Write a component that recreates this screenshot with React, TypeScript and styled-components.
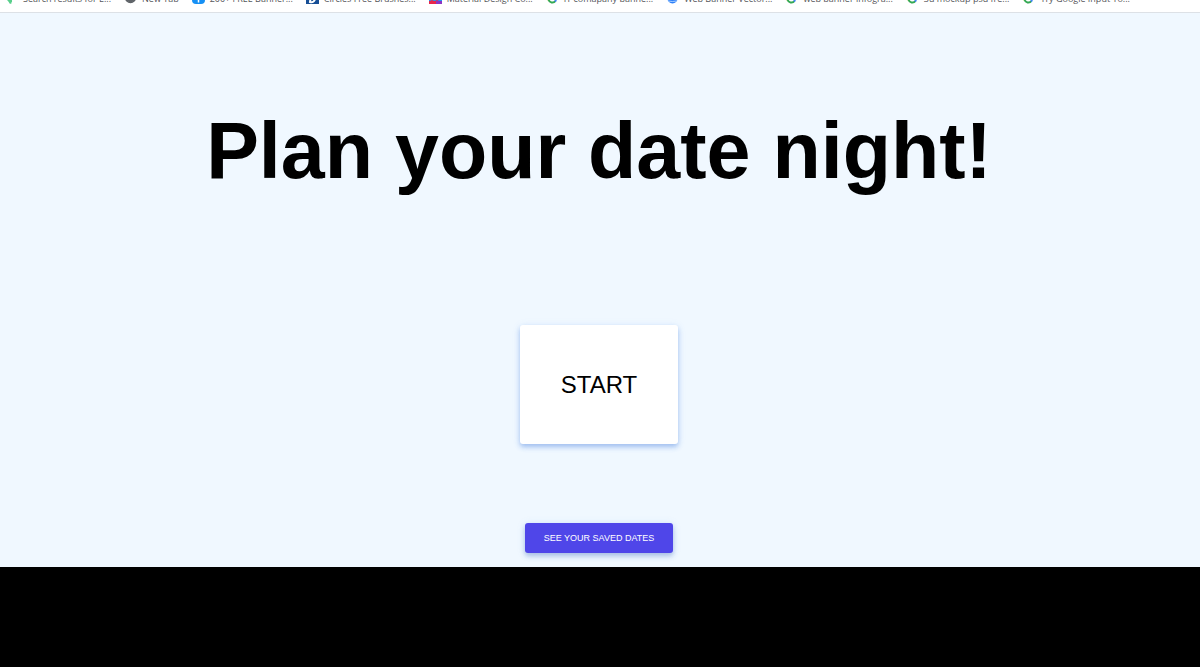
import React from "react";
import styled, { createGlobalStyle } from "styled-components";

const GlobalStyle = createGlobalStyle`
  * { box-sizing: border-box; }
  body {
    margin: 0;
    background: #000;
    font-family: "Liberation Sans", Arial, sans-serif;
  }
`;

const BookmarkBar = styled.nav`
  display: flex;
  align-items: flex-end;
  gap: 13px;
  height: 13px;
  padding: 0 0 5px 5px;
  overflow: hidden;
  background: #fff;
  border-bottom: 1px solid #dde1e6;
`;

const Bookmark = styled.a`
  display: flex;
  flex: none;
  align-items: flex-start;
  gap: 5px;
  color: #55565a;
  font: 9px/16px "Open Sans", sans-serif;
  white-space: nowrap;
  text-decoration: none;
`;

const Glyph = styled.svg`
  flex: none;
  width: 13px;
  height: 13px;
`;

const Hero = styled.main`
  display: flex;
  flex-direction: column;
  align-items: center;
  padding: 93px 2px 14px 0;
  background: #f0f8ff;
`;

const Title = styled.h1`
  margin: 0;
  color: #000;
  font-size: 79px;
  line-height: 90px;
  text-align: center;
`;

const StartButton = styled.button`
  width: 158px;
  height: 119px;
  margin: 129px 0 79px;
  padding: 0;
  border: 0;
  border-radius: 3px;
  background: #fff;
  color: #000;
  font: 24px/28px "Liberation Sans", Arial, sans-serif;
  box-shadow: 0 3px 5px rgba(60, 120, 220, 0.4), 0 1px 8px rgba(90, 150, 240, 0.12);
`;

const SavedButton = styled.button`
  height: 30px;
  padding: 0 19px;
  border: 0;
  border-radius: 3px;
  background: #4f46e9;
  color: #fff;
  font: 9px/14px "Liberation Sans", Arial, sans-serif;
  box-shadow: 0 3px 5px rgba(60, 100, 180, 0.35), 0 1px 8px rgba(90, 150, 240, 0.15);
`;

type Kind = "leaf" | "globe" | "facebook" | "d" | "material" | "google" | "cloud";

const drawings: Record<Kind, React.ReactNode> = {
  leaf: <path d="M2 7l3 2 2-1v3l-1 0 1 1-2 1-2-3-1-1Z" fill="#58cf8b" />,
  globe: (
    <>
      <circle cx="6.5" cy="6.5" r="5" fill="#fff" stroke="#5f6368" strokeWidth="1.5" />
      <path d="M2 6h3l2 3 3-1 1-2v3l-4 3-4-2Z" fill="#5f6368" />
    </>
  ),
  facebook: (
    <>
      <rect width="13" height="13" rx="4" fill="#1690f5" />
      <path d="M6.5 11.5V5h2M5 8h4" stroke="#fff" strokeWidth="1.5" fill="none" />
    </>
  ),
  d: (
    <>
      <rect width="13" height="13" fill="#174f96" />
      <path d="M5 4h2q3 0 2 4t-5 3Z" fill="none" stroke="#fff" strokeWidth="2" />
    </>
  ),
  material: (
    <>
      <rect width="13" height="13" fill="#2196f3" />
      <path d="M0 10h8v3H0Z" fill="#e8274b" />
      <path d="M7 10h6v3H7Z" fill="#8a35c4" />
      <path d="m1 10 2-1 2 1Zm5 0 2-1 2 1Z" fill="#e8274b" />
    </>
  ),
  google: (
    <g fill="none" strokeWidth="2">
      <path d="M2.5 6a4 4 0 0 1 7-2" stroke="#ea4335" />
      <path d="M2.5 6a4 4 0 0 0 0 3" stroke="#fbbc05" />
      <path d="M2.5 8.5a4 4 0 0 0 7 1.5" stroke="#34a853" />
      <path d="M6 7.5h4q0 2-1 3" stroke="#4285f4" />
    </g>
  ),
  cloud: (
    <>
      <circle cx="6.5" cy="7.5" r="5" fill="#2d7ff9" />
      <path d="M2 10q4 1 9 0" stroke="#a9d0ff" fill="none" />
    </>
  ),
};

const bookmarks: { kind: Kind; label: string }[] = [
  { kind: "leaf", label: "Search results for E..." },
  { kind: "globe", label: "New Tab" },
  { kind: "facebook", label: "200+ FREE Banner..." },
  { kind: "d", label: "Circles Free Brushes..." },
  { kind: "material", label: "Material Design Co..." },
  { kind: "google", label: "IT comapany banne..." },
  { kind: "cloud", label: "Web Banner Vector..." },
  { kind: "google", label: "web banner infogra..." },
  { kind: "google", label: "3d mockup psd fre..." },
  { kind: "google", label: "Try Google Input To..." },
];

export default function App() {
  return (
    <>
      <GlobalStyle />
      <BookmarkBar aria-label="Bookmarks">
        {bookmarks.map((b) => (
          <Bookmark key={b.label} href="#">
            <Glyph viewBox="0 0 13 13" aria-hidden="true">{drawings[b.kind]}</Glyph>
            {b.label}
          </Bookmark>
        ))}
      </BookmarkBar>
      <Hero>
        <Title>Plan your date night!</Title>
        <StartButton type="button">START</StartButton>
        <SavedButton type="button">SEE YOUR SAVED DATES</SavedButton>
      </Hero>
    </>
  );
}
